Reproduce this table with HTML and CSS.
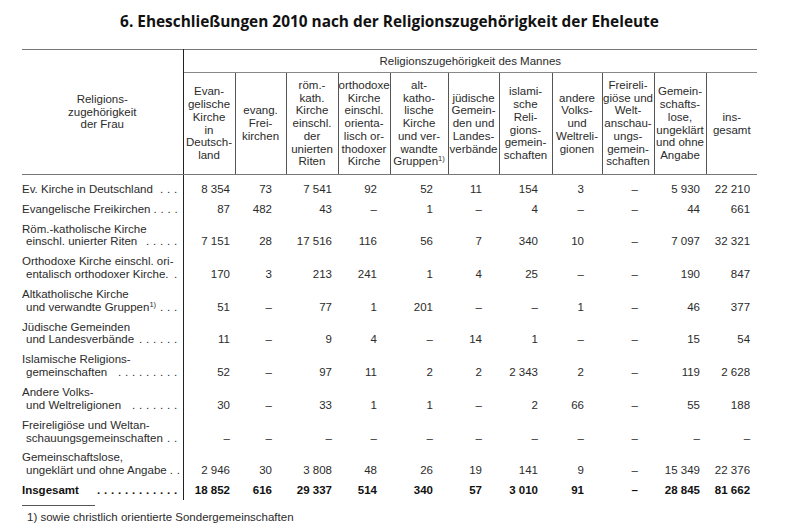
FILE: index.html
```html
<!DOCTYPE html>
<html lang="de">
<head>
<meta charset="utf-8">
<title>Eheschließungen 2010</title>
<link rel="stylesheet" href="styles.css">
</head>
<body>
<div class="page">
  <h1 class="title">6. Eheschließungen 2010 nach der Religionszugehörigkeit der Eheleute</h1>
  <table class="tab">
    <colgroup>
      <col class="w-stub">
      <col class="w52"><col class="w51"><col class="w52"><col class="w52"><col class="w58"><col class="w51"><col class="w53"><col class="w50"><col class="w52"><col class="w52"><col class="w51">
    </colgroup>
    <thead>
      <tr class="h-top">
        <th class="stub" rowspan="2">Religions-<br>zugehörigkeit<br>der Frau</th>
        <th class="span" colspan="11">Religionszugehörigkeit des Mannes</th>
      </tr>
      <tr class="h-sub">
        <th>Evan-<br>gelische<br>Kirche<br>in<br>Deutsch-<br>land</th>
        <th>evang.<br>Frei-<br>kirchen</th>
        <th>röm.-<br>kath.<br>Kirche<br>einschl.<br>der<br>unierten<br>Riten</th>
        <th>orthodoxe<br>Kirche<br>einschl.<br>orienta-<br>lisch or-<br>thodoxer<br>Kirche</th>
        <th>alt-<br>katho-<br>lische<br>Kirche<br>und ver-<br>wandte<br>Gruppen<sup>1)</sup></th>
        <th>jüdische<br>Gemein-<br>den und<br>Landes-<br>verbände</th>
        <th>islami-<br>sche<br>Reli-<br>gions-<br>gemein-<br>schaften</th>
        <th>andere<br>Volks-<br>und<br>Weltreli-<br>gionen</th>
        <th>Freireli-<br>giöse und<br>Welt-<br>anschau-<br>ungs-<br>gemein-<br>schaften</th>
        <th>Gemein-<br>schafts-<br>lose,<br>ungeklärt<br>und ohne<br>Angabe</th>
        <th>ins-<br>gesamt</th>
      </tr>
    </thead>
    <tbody>
      <tr class="first">
        <td class="lab"><div class="ln"><span>Ev. Kirche in Deutschland</span><span class="lead">. . .</span></div></td>
        <td>8&nbsp;354</td><td>73</td><td>7&nbsp;541</td><td>92</td><td>52</td><td>11</td><td>154</td><td>3</td><td>–</td><td>5&nbsp;930</td><td>22&nbsp;210</td>
      </tr>
      <tr>
        <td class="lab"><div class="ln"><span>Evangelische Freikirchen</span><span class="lead">. . . .</span></div></td>
        <td>87</td><td>482</td><td>43</td><td>–</td><td>1</td><td>–</td><td>4</td><td>–</td><td>–</td><td>44</td><td>661</td>
      </tr>
      <tr>
        <td class="lab"><div>Röm.-katholische Kirche</div><div class="ln ind"><span>einschl. unierter Riten</span><span class="lead">. . . . .</span></div></td>
        <td>7&nbsp;151</td><td>28</td><td>17&nbsp;516</td><td>116</td><td>56</td><td>7</td><td>340</td><td>10</td><td>–</td><td>7&nbsp;097</td><td>32&nbsp;321</td>
      </tr>
      <tr>
        <td class="lab"><div>Orthodoxe Kirche einschl. ori-</div><div class="ln ind"><span>entalisch orthodoxer Kirche.</span><span class="lead">.</span></div></td>
        <td>170</td><td>3</td><td>213</td><td>241</td><td>1</td><td>4</td><td>25</td><td>–</td><td>–</td><td>190</td><td>847</td>
      </tr>
      <tr>
        <td class="lab"><div>Altkatholische Kirche</div><div class="ln ind"><span>und verwandte Gruppen<sup>1)</sup></span><span class="lead">. . .</span></div></td>
        <td>51</td><td>–</td><td>77</td><td>1</td><td>201</td><td>–</td><td>–</td><td>1</td><td>–</td><td>46</td><td>377</td>
      </tr>
      <tr>
        <td class="lab"><div>Jüdische Gemeinden</div><div class="ln ind"><span>und Landesverbände</span><span class="lead">. . . . . .</span></div></td>
        <td>11</td><td>–</td><td>9</td><td>4</td><td>–</td><td>14</td><td>1</td><td>–</td><td>–</td><td>15</td><td>54</td>
      </tr>
      <tr>
        <td class="lab"><div>Islamische Religions-</div><div class="ln ind"><span>gemeinschaften</span><span class="lead">. . . . . . . . .</span></div></td>
        <td>52</td><td>–</td><td>97</td><td>11</td><td>2</td><td>2</td><td>2&nbsp;343</td><td>2</td><td>–</td><td>119</td><td>2&nbsp;628</td>
      </tr>
      <tr>
        <td class="lab"><div>Andere Volks-</div><div class="ln ind"><span>und Weltreligionen</span><span class="lead">. . . . . . .</span></div></td>
        <td>30</td><td>–</td><td>33</td><td>1</td><td>1</td><td>–</td><td>2</td><td>66</td><td>–</td><td>55</td><td>188</td>
      </tr>
      <tr>
        <td class="lab"><div>Freireligiöse und Weltan-</div><div class="ln ind"><span>schauungsgemeinschaften</span><span class="lead">. .</span></div></td>
        <td>–</td><td>–</td><td>–</td><td>–</td><td>–</td><td>–</td><td>–</td><td>–</td><td>–</td><td>–</td><td>–</td>
      </tr>
      <tr>
        <td class="lab"><div>Gemeinschaftslose,</div><div class="ln ind"><span>ungeklärt und ohne Angabe</span><span class="lead">. .</span></div></td>
        <td>2&nbsp;946</td><td>30</td><td>3&nbsp;808</td><td>48</td><td>26</td><td>19</td><td>141</td><td>9</td><td>–</td><td>15&nbsp;349</td><td>22&nbsp;376</td>
      </tr>
      <tr class="total">
        <td class="lab"><div class="ln"><span>Insgesamt</span><span class="lead">. . . . . . . . . . . .</span></div></td>
        <td>18&nbsp;852</td><td>616</td><td>29&nbsp;337</td><td>514</td><td>340</td><td>57</td><td>3&nbsp;010</td><td>91</td><td>–</td><td>28&nbsp;845</td><td>81&nbsp;662</td>
      </tr>
    </tbody>
  </table>
  <div class="rule"></div>
  <p class="note">1) sowie christlich orientierte Sondergemeinschaften</p>
</div>
</body>
</html>
```
FILE: styles.css
```css
html, body {
  margin: 0;
  padding: 0;
  background: #fff;
}
.page {
  padding: 12px 22px 0 22px;
  width: 735px;
  font-family: "Liberation Sans", Arial, sans-serif;
  font-size: 11.5px;
  color: #2b2b2b;
}
.title {
  margin: 0;
  font-family: "Open Sans", "Liberation Sans", sans-serif;
  font-weight: 700;
  font-size: 15.4px;
  line-height: 20px;
  text-align: center;
  color: #111;
}
.tab {
  margin-top: 17px;
  width: 735px;
  table-layout: fixed;
  border-collapse: collapse;
  border-top: 1px solid #777;
}
.w-stub { width: 161px; }
.w50 { width: 50px; }
.w51 { width: 51px; }
.w52 { width: 52px; }
.w53 { width: 53px; }
.w58 { width: 58px; }
th {
  font-weight: normal;
  padding: 0;
  line-height: 12.75px;
  text-align: center;
  vertical-align: middle;
}
th sup, .lab sup {
  font-size: 7.5px;
  line-height: 0;
  vertical-align: 4px;
}
.stub {
  border-right: 1px solid #222;
  border-bottom: 1px solid #777;
}
.h-top .span {
  height: 22px;
  border-bottom: 1px solid #888;
}
.h-sub th {
  height: 101px;
  border-left: 1px solid #555;
  border-bottom: 1px solid #777;
}
td {
  padding: 3.6px 0;
  line-height: 12.75px;
  text-align: right;
  vertical-align: bottom;
  white-space: nowrap;
}
.first td {
  padding-top: 7.75px;
}
td.lab {
  text-align: left;
  padding-right: 5px;
  border-right: 1px solid #222;
}
.ln {
  display: flex;
}
.ind {
  padding-left: 4px;
}
.lead {
  margin-left: auto;
  padding-left: 3px;
  letter-spacing: 0.3px;
  white-space: pre;
}
td:nth-child(2) { padding-right: 5px; }
td:nth-child(3) { padding-right: 14px; }
td:nth-child(4) { padding-right: 6px; }
td:nth-child(5) { padding-right: 13px; }
td:nth-child(6) { padding-right: 15px; }
td:nth-child(7) { padding-right: 17px; }
td:nth-child(8) { padding-right: 14px; }
td:nth-child(9) { padding-right: 18px; }
td:nth-child(10) { padding-right: 16px; }
td:nth-child(11) { padding-right: 6px; }
td:nth-child(12) { padding-right: 7px; }
.total td {
  font-weight: 700;
  color: #111;
}
.rule {
  width: 73px;
  height: 0;
  margin-top: 5px;
  border-top: 1px solid #555;
}
.note {
  margin: 5px 0 0 5px;
  line-height: 12.75px;
}
```
